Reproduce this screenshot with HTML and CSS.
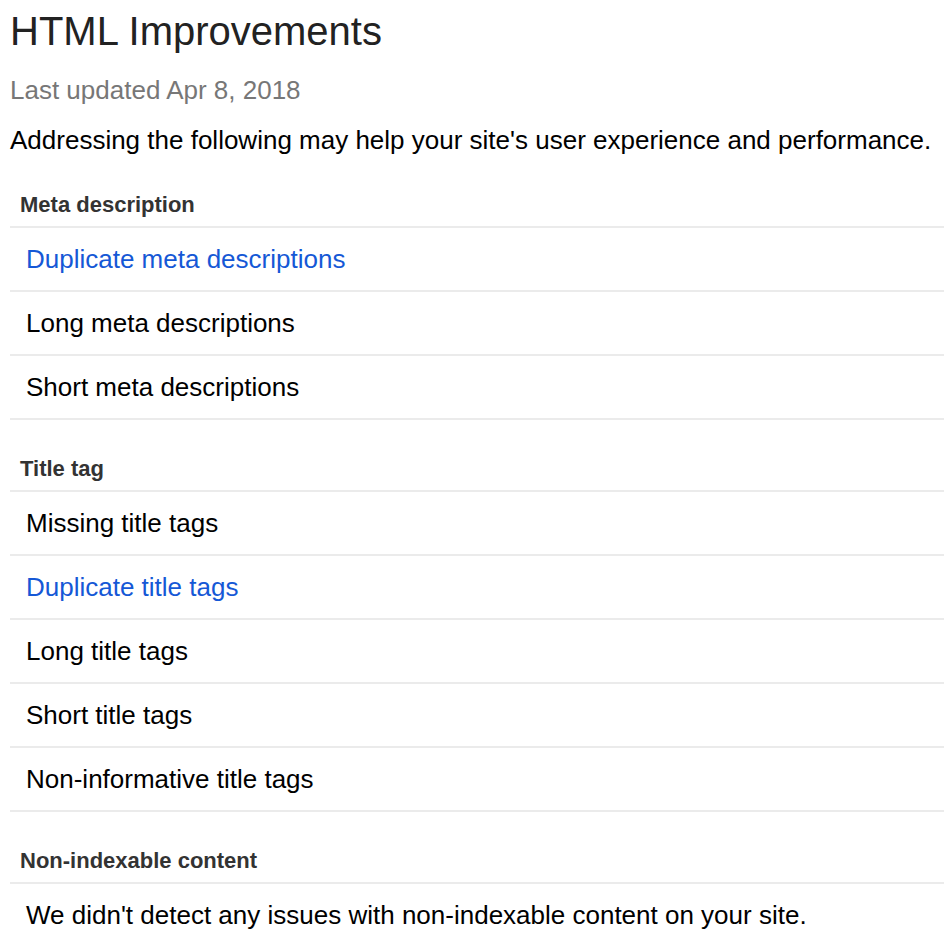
FILE: index.html
```html
<!DOCTYPE html>
<html lang="en">
<head>
<meta charset="utf-8">
<title>HTML Improvements</title>
<link rel="stylesheet" href="styles.css">
</head>
<body>
<div class="page">
  <h1 class="title">HTML Improvements</h1>
  <p class="updated">Last updated Apr 8, 2018</p>
  <p class="intro">Addressing the following may help your site's user experience and performance.</p>

  <section class="group">
    <h2 class="group-head">Meta description</h2>
    <ul class="rows">
      <li class="row"><a class="row-link" href="#">Duplicate meta descriptions</a></li>
      <li class="row">Long meta descriptions</li>
      <li class="row">Short meta descriptions</li>
    </ul>
  </section>

  <section class="group">
    <h2 class="group-head">Title tag</h2>
    <ul class="rows">
      <li class="row">Missing title tags</li>
      <li class="row"><a class="row-link" href="#">Duplicate title tags</a></li>
      <li class="row">Long title tags</li>
      <li class="row">Short title tags</li>
      <li class="row">Non-informative title tags</li>
    </ul>
  </section>

  <section class="group">
    <h2 class="group-head">Non-indexable content</h2>
    <ul class="rows">
      <li class="row row-last">We didn't detect any issues with non-indexable content on your site.</li>
    </ul>
  </section>
</div>
</body>
</html>
```

FILE: styles.css
```css
html, body {
  margin: 0;
  padding: 0;
  background: #ffffff;
}

body {
  font-family: "Liberation Sans", Arial, sans-serif;
  color: #000000;
}

.page {
  padding: 7px 0 0 10px;
}

.title {
  margin: 0;
  font-size: 40px;
  line-height: 48px;
  font-weight: normal;
  color: #222222;
}

.updated {
  margin: 19px 0 0 0;
  font-size: 26px;
  line-height: 32px;
  color: #777777;
}

.intro {
  margin: 18px 0 0 0;
  font-size: 26px;
  line-height: 32px;
  color: #000000;
}

.group {
  margin-top: 34px;
}

.group-head {
  margin: 0;
  padding: 1px 0 7px 10px;
  font-size: 22px;
  line-height: 28px;
  font-weight: bold;
  color: #333333;
  border-bottom: 2px solid #ebebeb;
}

.rows {
  list-style: none;
  margin: 0;
  padding: 0;
}

.row {
  height: 62px;
  line-height: 62px;
  padding-left: 16px;
  font-size: 26px;
  color: #000000;
  border-bottom: 2px solid #ebebeb;
  white-space: nowrap;
}

.row-last {
  border-bottom: none;
}

.row-link {
  color: #1558d6;
  text-decoration: none;
}
```
